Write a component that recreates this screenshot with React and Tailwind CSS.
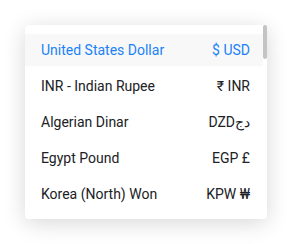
import React from "react";

const rows = [
  ["United States Dollar", "$ USD", true],
  ["INR - Indian Rupee", "₹ INR"],
  ["Algerian Dinar", "DZDدج"],
  ["Egypt Pound", "EGP £"],
  ["Korea (North) Won", "KPW ₩"],
];

export default function App() {
  return (
    <div className="w-[292px] h-[244px] bg-white pt-[25px] pl-[25px]" style={{ fontFamily: "Roboto, 'Open Sans', sans-serif" }}>
      <div className="relative w-[242px] h-[194px] bg-white rounded-[4px] shadow-[0_4px_22px_rgba(0,0,0,0.16)] pt-[9px] flex flex-col gap-[4px]">
        {rows.map(([name, code, active]) => (
          <div
            key={name}
            className={`h-[32px] w-[238px] flex items-center justify-between pl-[16px] pr-[13px] text-[14px] ${
              active ? "bg-[#f8f8f8] text-[#1a82f7]" : "text-[#202124]"
            }`}
          >
            <span>{name}</span>
            <span>{code}</span>
          </div>
        ))}
        <div className="absolute right-0 top-0 w-[4px] h-[34px] rounded-[2px] bg-[#c4c4c4]" />
      </div>
    </div>
  );
}
